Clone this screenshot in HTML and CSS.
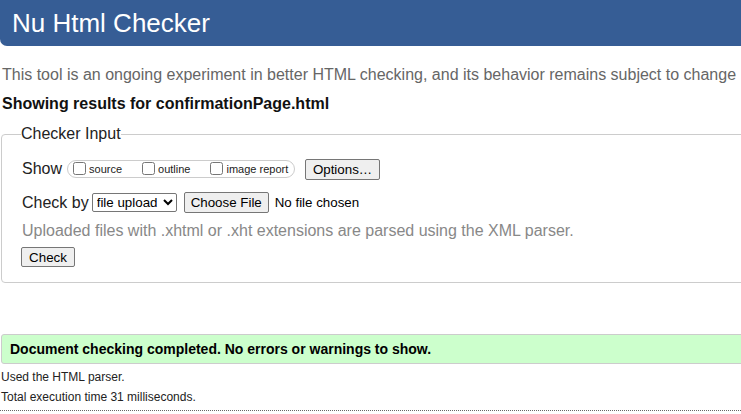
FILE: index.html
```html
<!DOCTYPE html>
<html>
<head>
<meta charset="utf-8">
<title>Nu Html Checker</title>
<link rel="stylesheet" href="styles.css">
</head>
<body>
<header class="masthead"><h1 class="title">Nu Html Checker</h1></header>
<p class="intro">This tool is an ongoing experiment in better HTML checking, and its behavior remains subject to change</p>
<p class="showing">Showing results for confirmationPage.html</p>
<form class="form">
  <fieldset class="checker">
    <legend class="legend">Checker Input</legend>
    <div class="row show-row">
      <span class="label">Show</span>
      <span class="opts">
        <label class="opt"><input type="checkbox" class="cb">source</label>
        <label class="opt"><input type="checkbox" class="cb">outline</label>
        <label class="opt"><input type="checkbox" class="cb">image report</label>
      </span>
      <button type="button" class="btn options">Options…</button>
    </div>
    <div class="row by-row">
      <span class="label">Check by</span>
      <select class="select"><option>file upload</option></select>
      <button type="button" class="btn choose">Choose File</button>
      <span class="nofile">No file chosen</span>
    </div>
    <p class="hint">Uploaded files with .xhtml or .xht extensions are parsed using the XML parser.</p>
    <button type="button" class="btn check">Check</button>
  </fieldset>
</form>
<div class="success"><p class="success-text">Document checking completed. No errors or warnings to show.</p></div>
<p class="meta">Used the HTML parser.</p>
<p class="meta">Total execution time 31 milliseconds.</p>
<hr class="dotted">
</body>
</html>
```
FILE: styles.css
```css
html, body {
  margin: 0;
  padding: 0;
  overflow: hidden;
}
body {
  font-family: "Liberation Sans", Arial, sans-serif;
  color: #000;
  width: 741px;
  height: 414px;
  background: #fff;
}
.masthead {
  background: #365d95;
  height: 46px;
  margin-right: -10px;
  border-radius: 0 0 0 7px;
  display: flex;
  align-items: center;
  padding-left: 12px;
}
.title {
  margin: 0;
  font-size: 26px;
  font-weight: normal;
  color: #fff;
  line-height: 30px;
  padding-bottom: 1px;
}
.intro {
  margin: 0;
  padding: 20px 0 0 2px;
  font-size: 16px;
  line-height: 18px;
  color: #666;
  white-space: nowrap;
}
.showing {
  margin: 0;
  padding: 11px 0 0 2px;
  font-size: 16px;
  line-height: 18px;
  font-weight: bold;
  color: #111;
}
.form {
  margin: 12px 0 0 0;
}
.checker {
  margin: 0 -6px 0 1px;
  padding: 4px 20px 15px 20px;
  border: 1px solid #ccc;
  border-radius: 4px;
  min-width: 0;
}
.legend {
  font-size: 16px;
  padding: 0;
  margin-left: -1px;
  color: #222;
}
.row {
  display: flex;
  align-items: center;
}
.label {
  font-size: 16px;
  color: #222;
}
.show-row {
  height: 22px;
  margin-top: 11px;
}
.opts {
  display: flex;
  align-items: flex-end;
  margin-left: 5px;
  height: 18px;
  width: 228px;
  border: 1px solid #ccc;
  border-radius: 9px;
  box-sizing: border-box;
  padding: 0 0 1px 5px;
}
.opt {
  display: flex;
  align-items: flex-end;
  font-size: 11px;
  line-height: 13px;
  color: #222;
  margin-right: 20px;
}
.opt:last-child {
  margin-right: 0;
}
.cb {
  margin: 0 3px 1px 0;
  width: 13px;
  height: 13px;
}
.btn {
  font-family: "Liberation Sans", Arial, sans-serif;
  font-size: 13.33px;
  color: #000;
  background: #efefef;
  border: 1px solid #767676;
  border-radius: 2px;
  padding: 1px 6px;
  height: 21px;
  line-height: 17px;
}
.options {
  margin-left: 10px;
  width: 75px;
}
.by-row {
  margin-top: 12px;
}
.select {
  font-family: "Liberation Sans", Arial, sans-serif;
  font-size: 13.33px;
  margin-left: 3px;
  height: 19px;
  width: 85px;
  border: 1px solid #767676;
  border-radius: 2px;
  background: #fff;
  color: #000;
  padding: 0;
}
.choose {
  margin-left: 7px;
  width: 85px;
  padding: 1px 4px;
}
.nofile {
  font-size: 13.33px;
  margin-left: 6px;
  color: #000;
}
.hint {
  margin: 9px 0 0 0;
  font-size: 16px;
  line-height: 18px;
  color: #888;
  white-space: nowrap;
}
.check {
  margin: 7px 0 0 -1px;
  width: 54px;
  height: 20px;
  padding: 0;
}
.success {
  margin: 51px -6px 0 1px;
  background: #cfc;
  border: 1px solid #ccc;
  border-radius: 3px;
  height: 28px;
  display: flex;
  align-items: center;
  padding-left: 8px;
}
.success-text {
  margin: 0;
  font-size: 14px;
  font-weight: bold;
  color: #000;
}
.meta {
  margin: 0;
  padding-left: 1px;
  font-size: 12px;
  line-height: 14px;
  margin-top: 6px;
  color: #222;
}
.dotted {
  margin: 6px 0 0 0;
  border: 0;
  border-top: 1px dotted #666;
  height: 0;
}
```
